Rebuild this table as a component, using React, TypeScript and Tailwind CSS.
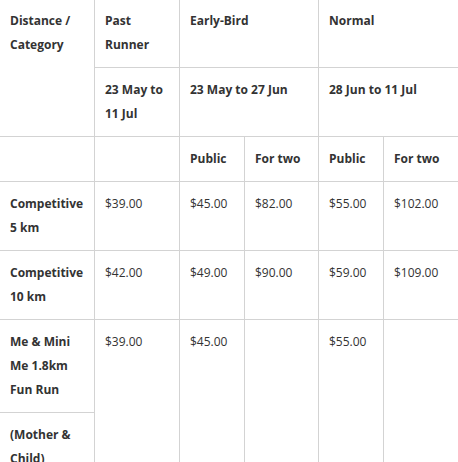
import React from "react";

const cell =
  "border-r border-b border-[#d3d3d3] px-[10px] py-[10px] leading-6 text-[12px] text-[#333]";
const head = cell + " font-bold";
const price = cell + " font-normal text-[#111]";

export default function App() {
  return (
    <div
      className="w-[458px] h-[462px] overflow-hidden bg-white"
      style={{ fontFamily: '"Open Sans", "Liberation Sans", sans-serif' }}
    >
      <div className="-mt-[1px] grid w-[480px] grid-cols-[95px_85px_65px_74px_65px_96px]">
        {/* Row 1 */}
        <div className={head + " row-span-2"}>Distance / Category</div>
        <div className={head}>Past Runner</div>
        <div className={head + " col-span-2"}>Early-Bird</div>
        <div className={head + " col-span-2"}>Normal</div>
        {/* Row 2 */}
        <div className={head}>23 May to 11 Jul</div>
        <div className={head + " col-span-2"}>23 May to 27 Jun</div>
        <div className={head + " col-span-2"}>28 Jun to 11 Jul</div>
        {/* Row 3 */}
        <div className={head}></div>
        <div className={head}></div>
        <div className={head}>Public</div>
        <div className={head}>For two</div>
        <div className={head}>Public</div>
        <div className={head}>For two</div>
        {/* Row 4 */}
        <div className={head}>Competitive 5 km</div>
        <div className={price}>$39.00</div>
        <div className={price}>$45.00</div>
        <div className={price}>$82.00</div>
        <div className={price}>$55.00</div>
        <div className={price}>$102.00</div>
        {/* Row 5 */}
        <div className={head}>Competitive 10 km</div>
        <div className={price}>$42.00</div>
        <div className={price}>$49.00</div>
        <div className={price}>$90.00</div>
        <div className={price}>$59.00</div>
        <div className={price}>$109.00</div>
        {/* Row 6 */}
        <div className={head}>Me &amp; Mini Me 1.8km Fun Run</div>
        <div className={price + " row-span-2"}>$39.00</div>
        <div className={price + " row-span-2"}>$45.00</div>
        <div className={price + " row-span-2"}></div>
        <div className={price + " row-span-2"}>$55.00</div>
        <div className={price + " row-span-2"}></div>
        {/* Row 7 */}
        <div className={head}>(Mother &amp; Child)</div>
      </div>
    </div>
  );
}
